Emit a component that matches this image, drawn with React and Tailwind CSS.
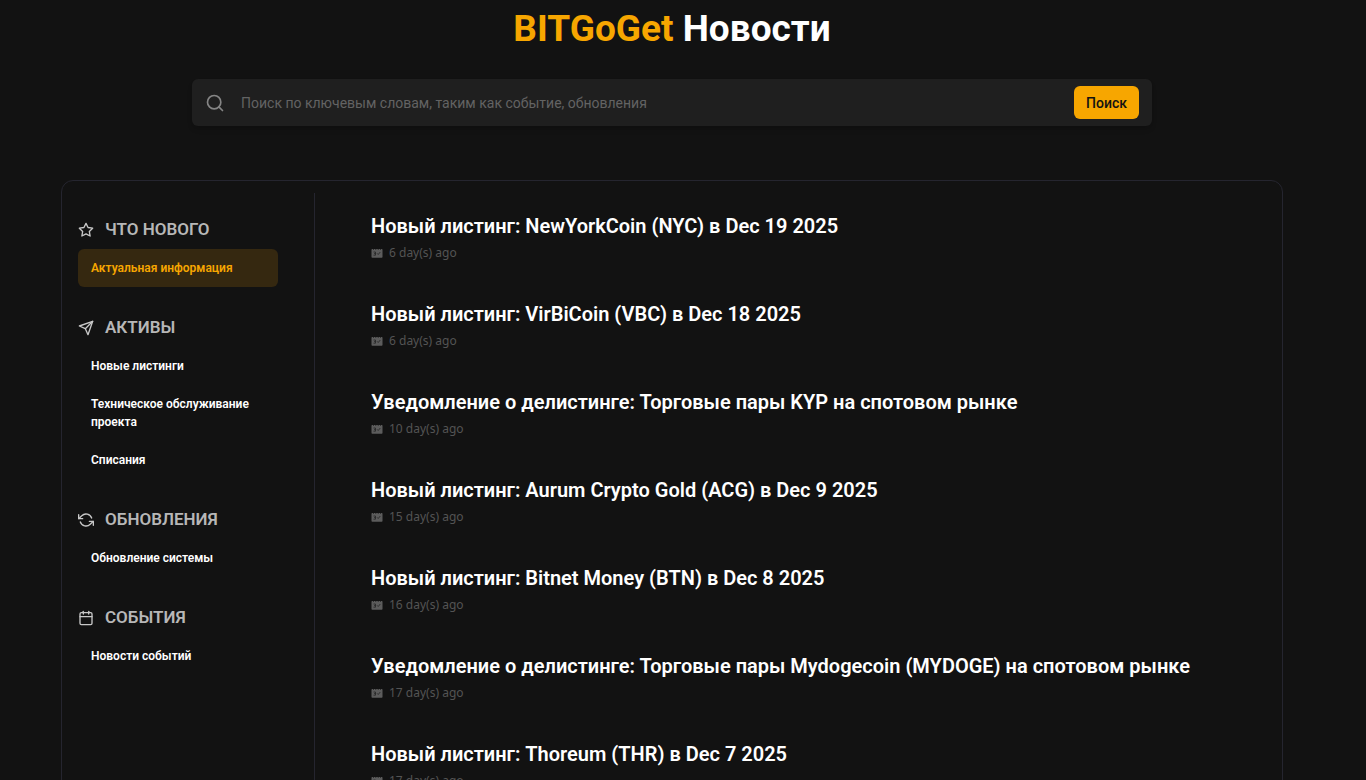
import { useState } from "react";
import { FiCalendar, FiRefreshCcw, FiSearch, FiSend, FiStar } from "react-icons/fi";

const sections = [
  { title: "ЧТО НОВОГО", icon: FiStar, items: ["Актуальная информация"] },
  {
    title: "АКТИВЫ",
    icon: FiSend,
    items: ["Новые листинги", "Техническое обслуживание проекта", "Списания"],
  },
  { title: "ОБНОВЛЕНИЯ", icon: FiRefreshCcw, items: ["Обновление системы"] },
  { title: "СОБЫТИЯ", icon: FiCalendar, items: ["Новости событий"] },
];

const news = [
  { title: "Новый листинг: NewYorkCoin (NYC) в Dec 19 2025", days: 6 },
  { title: "Новый листинг: VirBiCoin (VBC) в Dec 18 2025", days: 6 },
  { title: "Уведомление о делистинге: Торговые пары KYP на спотовом рынке", days: 10 },
  { title: "Новый листинг: Aurum Crypto Gold (ACG) в Dec 9 2025", days: 15 },
  { title: "Новый листинг: Bitnet Money (BTN) в Dec 8 2025", days: 16 },
  { title: "Уведомление о делистинге: Торговые пары Mydogecoin (MYDOGE) на спотовом рынке", days: 17 },
  { title: "Новый листинг: Thoreum (THR) в Dec 7 2025", days: 17 },
];

function DateIcon() {
  return (
    <svg width="12" height="12" viewBox="0 0 12 12" aria-hidden="true">
      <path
        d="M1.2 2h1v.8h.8V2h1.400v.8h.8V2h1.600v.8h.8V2h1.400v.8h.8V2h1q.7 0 .7.7v7.300q0 .7-.7.7H1.200q-.7 0-.7-.7V2.700Q.5 2 1.200 2z"
        fill="#5c5c5c"
      />
      <path
        d="M2.500 5h2v3.200h-2M3 6.600h1.500M6 6.300l1.200 1.200L9.300 5"
        stroke="#242424"
        strokeWidth="0.800"
        fill="none"
      />
    </svg>
  );
}

function Sidebar({ active, onSelect }) {
  return (
    <aside className="w-[253px] shrink-0 border-r border-[#25252f] pt-6 pr-9 pl-4">
      {sections.map(({ title, icon: Icon, items }) => (
        <section key={title} className="mb-7">
          <h2 className="mb-1.5 flex h-[26px] items-center gap-[11px] text-[17px] font-semibold text-[#b7b7b7]">
            <Icon size={16} className="text-[#c8c8c8]" aria-hidden="true" />
            {title}
          </h2>
          <ul>
            {items.map((item) => (
              <li key={item}>
                <button
                  type="button"
                  onClick={() => onSelect(item)}
                  className={`w-full rounded-md px-[13px] py-2.5 text-left text-xs leading-[18px] font-semibold ${
                    active === item ? "bg-[#352810] text-[#f7a600]" : "text-white"
                  }`}
                >
                  {item}
                </button>
              </li>
            ))}
          </ul>
        </section>
      ))}
    </aside>
  );
}

export default function App() {
  const [active, setActive] = useState("Актуальная информация");
  const [query, setQuery] = useState("");

  return (
    <div className="h-screen overflow-hidden bg-[#121212] pr-[22px] font-[Roboto,sans-serif] text-white">
      <h1 className="pt-1 text-center text-[37px] leading-[50px] font-bold">
        <span className="text-[#f7a600]">BITGoGet</span> Новости
      </h1>

      <form
        onSubmit={(e) => e.preventDefault()}
        className="mx-auto mt-[25px] flex h-[47px] max-w-[960px] items-center rounded-md bg-[#1f1f1f] px-[13px] shadow-md"
      >
        <FiSearch size={20} className="shrink-0 text-[#858585]" aria-hidden="true" />
        <input
          type="text"
          aria-label="Поиск"
          value={query}
          onChange={(e) => setQuery(e.target.value)}
          placeholder="Поиск по ключевым словам, таким как событие, обновления"
          className="min-w-0 flex-1 bg-transparent px-4 text-sm text-white outline-none placeholder:text-[#636363]"
        />
        <button type="submit" className="h-[33px] rounded-md bg-[#f7a600] px-3 text-sm font-medium text-[#121212]">
          Поиск
        </button>
      </form>

      <main className="mx-auto mt-[54px] flex min-h-screen w-[91%] max-w-[1222px] rounded-xl border border-[#25252f] py-3">
        <Sidebar active={active} onSelect={setActive} />
        <div className="min-w-0 flex-1 px-14 pt-[18px]">
          {news.map(({ title, days }) => (
            <article key={title} className="mb-9">
              <h3 className="text-xl leading-[30px] font-semibold">
                <a href="#">{title}</a>
              </h3>
              <p className="mt-0.5 flex h-5 items-center gap-1.5 font-['Noto_Sans',sans-serif] text-xs text-[#545454]">
                <DateIcon />
                {days} day(s) ago
              </p>
            </article>
          ))}
        </div>
      </main>
    </div>
  );
}
